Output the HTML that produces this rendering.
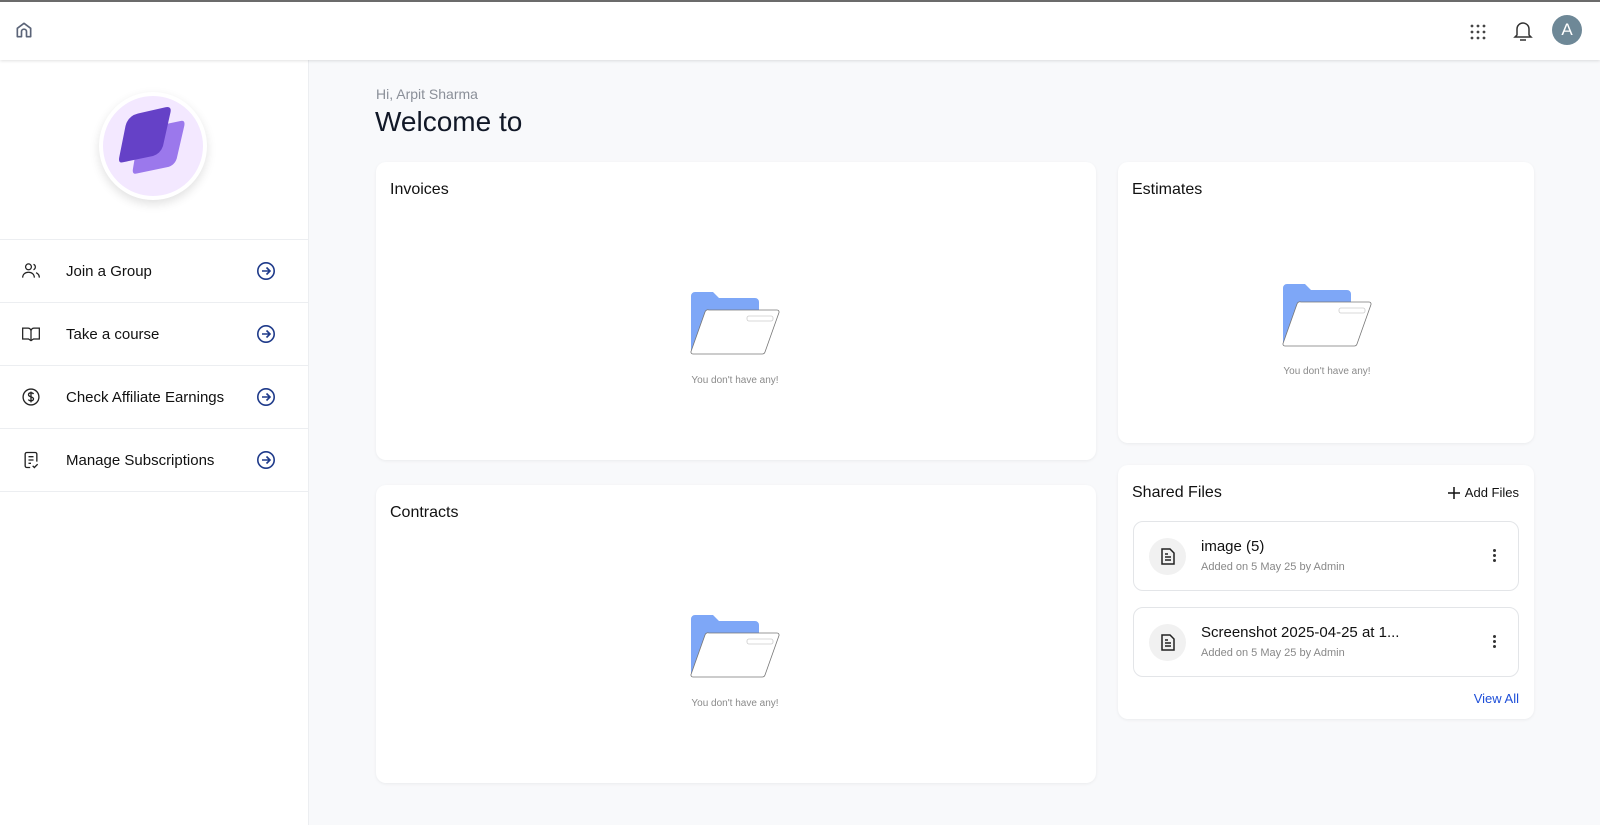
<!DOCTYPE html>
<html><head><meta charset="utf-8"><style>
*{box-sizing:border-box;margin:0;padding:0}
body{width:1600px;height:825px;overflow:hidden;background:#f8f9fb;font-family:"Liberation Sans",Roboto,sans-serif;color:#111827;position:relative}
.top{position:absolute;left:0;top:0;width:1600px;height:60px;background:#fff;border-top:2px solid #6b6b6b;box-shadow:0 1px 3px rgba(0,0,0,.12);z-index:2}
.side{position:absolute;left:0;top:60px;width:309px;height:765px;background:#fff;border-right:1px solid #eceef1}
.logo{position:absolute;left:99px;top:32px;width:108px;height:108px;border-radius:50%;background:#f3e8ff;border:4px solid #fff;box-shadow:0 4px 10px rgba(0,0,0,.12)}
.div{position:absolute;left:0;width:309px;height:1px;background:#eceef1}
.item{position:absolute;left:0;width:309px;height:62px}
.item span{position:absolute;left:66px;top:23px;font-size:15px;color:#111}
.item .ic{position:absolute;left:21px;top:21px}
.item .ar{position:absolute;left:256px;top:21px}
.card{position:absolute;background:#fff;border-radius:10px;box-shadow:0 1px 3px rgba(0,0,0,.06)}
.card h3{position:absolute;left:14px;top:19px;font-size:16px;font-weight:normal;color:#111}
.empty{position:absolute;font-size:10px;color:#8a8a8a;text-align:center;width:200px}
.file{position:absolute;left:15px;width:386px;height:70px;border:1px solid #e3e5e8;border-radius:10px}
.file .c{position:absolute;left:15px;top:16px;width:37px;height:37px;border-radius:50%;background:#f1f1f1}
.file b{position:absolute;left:67px;top:16px;font-size:15px;font-weight:normal;color:#111}
.file i{position:absolute;left:67px;top:39px;font-size:11px;font-style:normal;color:#888}
.dots{position:absolute;right:22px;top:27px;width:3px}
.dots div{width:3px;height:3px;border-radius:50%;background:#333;margin-bottom:2px}
</style></head><body>
<div class="top">
<svg style="position:absolute;left:14px;top:18px" width="20" height="20" viewBox="0 0 24 24" fill="none" stroke="#5b6478" stroke-width="2" stroke-linejoin="round"><path d="M4 20V10l8-6 8 6v10h-5v-6a3 3 0 0 0-6 0v6z"/></svg>
<svg style="position:absolute;left:1470px;top:22px" width="16" height="16" viewBox="0 0 16 16" fill="#444"><circle cx="2" cy="2" r="1.4"/><circle cx="8" cy="2" r="1.4"/><circle cx="14" cy="2" r="1.4"/><circle cx="2" cy="8" r="1.4"/><circle cx="8" cy="8" r="1.4"/><circle cx="14" cy="8" r="1.4"/><circle cx="2" cy="14" r="1.4"/><circle cx="8" cy="14" r="1.4"/><circle cx="14" cy="14" r="1.4"/></svg>
<svg style="position:absolute;left:1513px;top:18px" width="20" height="22" viewBox="0 0 20 22" fill="none" stroke="#333" stroke-width="1.5"><path d="M4 15V9a6 6 0 0 1 12 0v6l2 2H2z"/><path d="M7 20h6"/></svg>
<div style="position:absolute;left:1552px;top:13px;width:30px;height:30px;border-radius:50%;background:#6e8897;color:#fff;font-size:17px;text-align:center;line-height:30px">A</div>
</div>
<div class="side">
<div class="logo"><svg width="100" height="100" viewBox="0 0 100 100" style="position:absolute;left:0;top:0"><g transform="translate(50 50) scale(1.25) translate(-50 -48)"><path d="M38 42q2-8 10-9l24-5q4-1 3 4l-6 26q-2 6-8 7l-24 5q-4 1-3-4z" fill="#9b78ec"/><path d="M28 32q2-8 10-10l22-5q5-1 4 4l-6 27q-2 6-8 8l-24 5q-4 1-3-4z" fill="#6541c7"/></g></svg></div>
<div class="div" style="top:179px"></div>
<div class="item" style="top:180px"><svg class="ic" width="20" height="20" viewBox="0 0 24 24" fill="none" stroke="#222" stroke-width="1.5"><circle cx="9" cy="7" r="3.5"/><path d="M2 20c0-4 3-6.5 7-6.5s7 2.5 7 6.5"/><path d="M15 4a3.5 3.5 0 0 1 0 6.5M18 14c2 .8 4 2.6 4 6"/></svg><span>Join a Group</span><svg class="ar" width="20" height="20" viewBox="0 0 20 20" fill="none" stroke="#1e3a8a" stroke-width="1.6"><circle cx="10" cy="10" r="8.2"/><path d="M6 10h8M10.5 6.5 14 10l-3.5 3.5"/></svg></div>
<div class="div" style="top:242px"></div>
<div class="item" style="top:243px"><svg class="ic" width="20" height="20" viewBox="0 0 24 24" fill="none" stroke="#222" stroke-width="1.5"><path d="M2 5h6a4 4 0 0 1 4 3 4 4 0 0 1 4-3h6v13h-7l-3 2-3-2H2z"/><path d="M12 8v12"/></svg><span>Take a course</span><svg class="ar" width="20" height="20" viewBox="0 0 20 20" fill="none" stroke="#1e3a8a" stroke-width="1.6"><circle cx="10" cy="10" r="8.2"/><path d="M6 10h8M10.5 6.5 14 10l-3.5 3.5"/></svg></div>
<div class="div" style="top:305px"></div>
<div class="item" style="top:306px"><svg class="ic" width="20" height="20" viewBox="0 0 24 24" fill="none" stroke="#222" stroke-width="1.6"><circle cx="12" cy="12" r="9.5"/><path d="M15 8.5c-.5-1-1.6-1.5-3-1.5-1.7 0-3 .8-3 2.3 0 3.2 6 1.8 6 5 0 1.4-1.3 2.3-3 2.3-1.5 0-2.6-.6-3.1-1.6M12 5.5v13"/></svg><span>Check Affiliate Earnings</span><svg class="ar" width="20" height="20" viewBox="0 0 20 20" fill="none" stroke="#1e3a8a" stroke-width="1.6"><circle cx="10" cy="10" r="8.2"/><path d="M6 10h8M10.5 6.5 14 10l-3.5 3.5"/></svg></div>
<div class="div" style="top:368px"></div>
<div class="item" style="top:369px"><svg class="ic" width="20" height="20" viewBox="0 0 24 24" fill="none" stroke="#222" stroke-width="1.6"><path d="M11 21H7a2 2 0 0 1-2-2V5a2 2 0 0 1 2-2h10a2 2 0 0 1 2 2v9"/><path d="M9 8h6M9 12h6M9 16h3M14 19l2 2 4-4"/></svg><span>Manage Subscriptions</span><svg class="ar" width="20" height="20" viewBox="0 0 20 20" fill="none" stroke="#1e3a8a" stroke-width="1.6"><circle cx="10" cy="10" r="8.2"/><path d="M6 10h8M10.5 6.5 14 10l-3.5 3.5"/></svg></div>
<div class="div" style="top:431px"></div>
</div>
<div style="position:absolute;left:376px;top:86px;font-size:14px;color:#8a8f98">Hi, Arpit Sharma</div>
<div style="position:absolute;left:375px;top:106px;font-size:28px;color:#111827">Welcome to</div>

<svg width="0" height="0" style="position:absolute"><defs><g id="fold"><path d="M2 4a4 4 0 0 1 4-4h18l6 6h36a4 4 0 0 1 4 4v50H2z" fill="#7ea7f7"/><path d="M20 18h68a2 2 0 0 1 2 2.5L76 60a3 3 0 0 1-3 2H4a2 2 0 0 1-2-2.5L16 20a3 3 0 0 1 4-2z" fill="#fff" stroke="#777" stroke-width="0.8"/><rect x="58" y="24" width="26" height="5" rx="2" fill="#fff" stroke="#ccc" stroke-width="0.8"/></g></defs></svg>

<div class="card" style="left:376px;top:162px;width:720px;height:298px"><h3>Invoices</h3>
<svg style="position:absolute;left:313px;top:130px" width="92" height="64" viewBox="0 0 92 64"><use href="#fold"/></svg>
<div class="empty" style="left:259px;top:213px">You don't have any!</div></div>
<div class="card" style="left:376px;top:485px;width:720px;height:298px"><h3>Contracts</h3>
<svg style="position:absolute;left:313px;top:130px" width="92" height="64" viewBox="0 0 92 64"><use href="#fold"/></svg>
<div class="empty" style="left:259px;top:213px">You don't have any!</div></div>
<div class="card" style="left:1118px;top:162px;width:416px;height:281px"><h3>Estimates</h3>
<svg style="position:absolute;left:163px;top:122px" width="92" height="64" viewBox="0 0 92 64"><use href="#fold"/></svg>
<div class="empty" style="left:109px;top:204px">You don't have any!</div></div>
<div class="card" style="left:1118px;top:465px;width:416px;height:254px"><h3>Shared Files</h3>
<div style="position:absolute;right:15px;top:20px;font-size:13px;color:#111">Add Files</div>
<svg style="position:absolute;left:329px;top:21px" width="14" height="14" viewBox="0 0 14 14" stroke="#111" stroke-width="1.5"><path d="M7 1v12M1 7h12"/></svg>
<div class="file" style="top:56px"><div class="c"><svg width="37" height="37" viewBox="0 0 37 37" fill="none" stroke="#222" stroke-width="1.5"><path d="M13 11h8l4 4v11H13z"/><path d="M16 19h6M16 22h6M16 16h3"/></svg></div><b>image (5)</b><i>Added on 5 May 25 by Admin</i><div class="dots"><div></div><div></div><div></div></div></div>
<div class="file" style="top:142px"><div class="c"><svg width="37" height="37" viewBox="0 0 37 37" fill="none" stroke="#222" stroke-width="1.5"><path d="M13 11h8l4 4v11H13z"/><path d="M16 19h6M16 22h6M16 16h3"/></svg></div><b>Screenshot 2025-04-25 at 1...</b><i>Added on 5 May 25 by Admin</i><div class="dots"><div></div><div></div><div></div></div></div>
<div style="position:absolute;right:15px;top:226px;font-size:13px;color:#1d4ed8">View All</div>
</div>
</body></html>
